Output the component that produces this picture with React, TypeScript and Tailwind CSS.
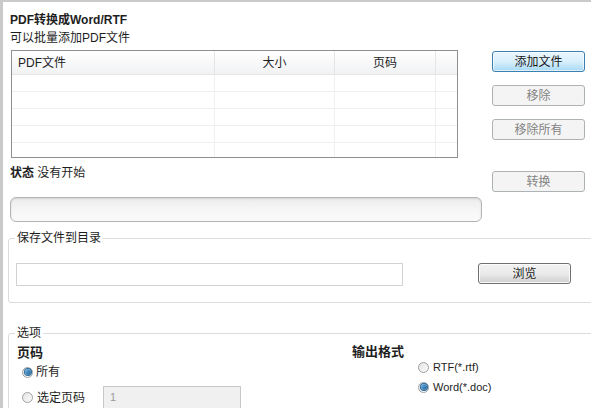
import React from "react";

function Btn({
  label,
  kind = "disabled",
}: {
  label: string;
  kind?: "focus" | "disabled" | "normal";
}) {
  const styles =
    kind === "focus"
      ? "border-[#3c7fb1] bg-gradient-to-b from-[#eaf6fd] via-[#d9f0fc] to-[#a7d9f5] text-[#1a1a1a] shadow-[inset_0_0_0_1px_#ffffffa0]"
      : kind === "normal"
        ? "border-[#707070] bg-gradient-to-b from-[#f2f2f2] via-[#ebebeb] to-[#cfcfcf] text-[#1a1a1a] shadow-[inset_0_0_0_1px_#fcfcfc]"
        : "border-[#adb2b5] bg-[#f4f4f4] text-[#838383]";
  return (
    <div
      className={`w-[93px] h-[21px] shrink-0 rounded-[3px] border flex items-center justify-center leading-none ${styles}`}
    >
      {label}
    </div>
  );
}

function Radio({ checked }: { checked?: boolean }) {
  return (
    <span className="w-[11px] h-[11px] shrink-0 rounded-full border border-[#a0a0a0] bg-gradient-to-br from-[#e4e4e4] to-[#fafafa] flex items-center justify-center">
      {checked && (
        <span className="w-[6px] h-[6px] rounded-full bg-gradient-to-br from-[#6fb7e8] to-[#1f5f94] ring-1 ring-[#2b6a9c]" />
      )}
    </span>
  );
}

export default function App() {
  const rows = [0, 1, 2, 3, 4];
  return (
    <div className="w-[591px] h-[408px] overflow-hidden bg-white border-l-[3px] border-t-2 border-[#cacaca] text-[12px] text-[#1e1e1e] font-['Tahoma','Liberation_Sans','Noto_Sans_CJK_SC',sans-serif]">
      <div className="pl-[7px] pt-[9px]">
        <div className="h-[18px] leading-[18px] font-bold">PDF转换成Word/RTF</div>
        <div className="h-[18px] leading-[18px]">可以批量添加PDF文件</div>

        <div className="flex mt-[3px]">
          {/* file table */}
          <div className="ml-[1px] w-[447px] h-[108px] border border-[#8e8f8f] overflow-hidden">
            <div className="grid grid-cols-[203px_120px_101px_1fr] h-[24px] bg-gradient-to-b from-white to-[#f1f2f4] border-b border-[#e5e5e5]">
              <div className="flex items-center pl-[6px] border-r border-[#e5e5e5]">PDF文件</div>
              <div className="flex items-center justify-center border-r border-[#e5e5e5]">大小</div>
              <div className="flex items-center justify-center border-r border-[#e5e5e5]">页码</div>
              <div />
            </div>
            {rows.map((r) => (
              <div
                key={r}
                className="grid grid-cols-[203px_120px_101px_1fr] h-[17px] border-b border-[#efefef]"
              >
                <div className="border-r border-[#efefef]" />
                <div className="border-r border-[#efefef]" />
                <div className="border-r border-[#efefef]" />
                <div />
              </div>
            ))}
          </div>

          {/* side buttons */}
          <div className="ml-[34px] mt-[1px] flex flex-col gap-[13px]">
            <Btn label="添加文件" kind="focus" />
            <Btn label="移除" />
            <Btn label="移除所有" />
          </div>
        </div>

        <div className="flex">
          <div className="w-[472px]">
            <div className="h-[16px] leading-[16px] mt-[7px]">
              <span className="font-bold">状态</span> 没有开始
            </div>
            <div className="mt-[16px] h-[25px] rounded-[6px] border border-[#b4b4b4] bg-gradient-to-b from-[#ececec] via-[#f6f6f6] to-[#fbfbfb] shadow-[inset_0_1px_2px_#d6d6d6]" />
          </div>
          <div className="ml-[10px] mt-[13px]">
            <Btn label="转换" />
          </div>
        </div>
      </div>

      {/* save directory group */}
      <fieldset className="ml-[5px] mr-[-12px] mt-[8px] border border-[#dcdcdc] rounded-[3px]">
        <legend className="ml-[6px] px-[2px] h-[16px] leading-[16px] text-[#1e1e1e]">保存文件到目录</legend>
        <div className="flex items-start mt-[17px] pb-[16px]">
          <div className="ml-[7px] w-[387px] h-[23px] border border-[#d2d2d2] bg-white" />
          <div className="ml-[75px]">
            <Btn label="浏览" kind="normal" />
          </div>
        </div>
      </fieldset>

      {/* options group */}
      <fieldset className="ml-[5px] mr-[-12px] mt-[22px] h-[120px] border border-[#dcdcdc] rounded-[3px]">
        <legend className="ml-[6px] px-[2px] h-[16px] leading-[16px]">选项</legend>
        <div className="flex">
          <div className="w-[343px]">
            <div className="ml-[8px] mt-[4px] h-[16px] leading-[16px] font-bold text-[13px]">页码</div>
            <div className="ml-[13px] mt-[3px] h-[16px] flex items-center gap-[3px]">
              <Radio checked />
              <span>所有</span>
            </div>
            <div className="ml-[13px] mt-[6px] h-[23px] flex items-center">
              <Radio />
              <span className="ml-[4px]">选定页码</span>
              <div className="ml-[18px] w-[138px] h-[23px] border border-[#c8c8c8] bg-[#f0f0f0] flex items-center pl-[6px] text-[#9a9a9a] text-[11px]">
                1
              </div>
            </div>
          </div>
          <div>
            <div className="mt-[4px] h-[14px] leading-[14px] font-bold text-[13px]">输出格式</div>
            <div className="ml-[66px] h-[16px] flex items-center gap-[4px] text-[11px]">
              <Radio />
              <span>RTF(*.rtf)</span>
            </div>
            <div className="ml-[66px] mt-[4px] h-[16px] flex items-center gap-[4px] text-[11px]">
              <Radio checked />
              <span>Word(*.doc)</span>
            </div>
          </div>
        </div>
      </fieldset>
    </div>
  );
}
